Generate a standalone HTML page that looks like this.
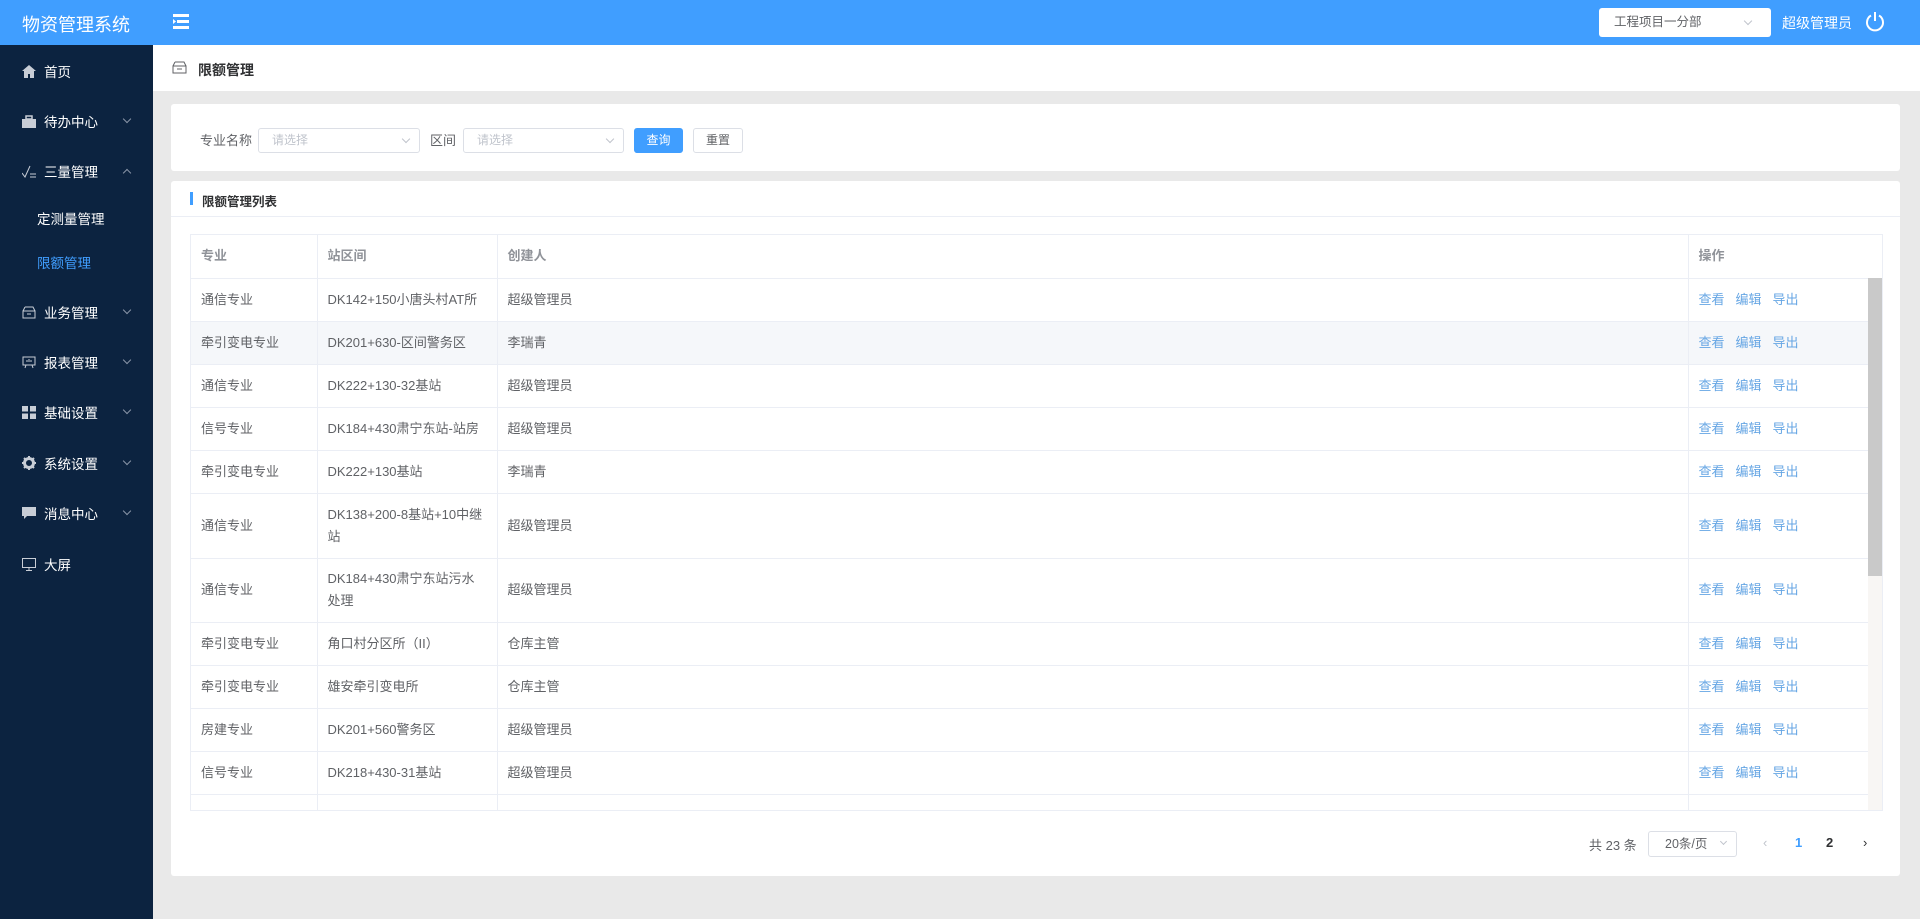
<!DOCTYPE html>
<html><head><meta charset="utf-8"><style>
*{box-sizing:border-box;margin:0;padding:0}
body{width:1920px;height:919px;overflow:hidden;background:#e9e9e9;font-family:"Liberation Sans","Noto Sans CJK SC",sans-serif;color:#606266;position:relative}
.abs{position:absolute}
#hdr{left:0;top:0;width:1920px;height:45px;background:#409eff}
#logo{left:22px;top:11px;font-size:18px;color:#fff}
#side{left:0;top:45px;width:153px;height:874px;background:#0c2340}
.mi{position:absolute;left:22px;font-size:13.5px;color:#fff;display:flex;align-items:center;height:20px}
.mi svg{margin-right:8px}
.arr{position:absolute;left:124px;width:6px;height:6px;border-right:1px solid #8b96a8;border-bottom:1px solid #8b96a8;transform:rotate(45deg)}
.sub{position:absolute;left:37px;font-size:13.5px;color:#fff}
#crumb{left:153px;top:45px;width:1767px;height:46px;background:#fff}
.card{background:#fff;border-radius:3px}
.sel{position:absolute;height:25px;border:1px solid #dcdfe6;border-radius:3px;background:#fff;font-size:12px;color:#c0c4cc;padding-left:13px;line-height:23px}
.sel i{position:absolute;right:10px;top:7px;width:6px;height:6px;border-right:1px solid #c0c4cc;border-bottom:1px solid #c0c4cc;transform:rotate(45deg)}
.btn{position:absolute;height:25px;border-radius:3px;font-size:12px;text-align:center;line-height:23px}
table{border-collapse:collapse;font-size:13px;color:#606266;table-layout:fixed}
td,th{padding:0 10px;text-align:left;font-weight:normal;border-bottom:1px solid #ebeef5;line-height:22px}
th{color:#909399;height:43px;font-weight:bold}
td.c0,th.c0{border-right:1px solid #ebeef5}
.op span{color:#66a6e4;margin-right:11px}
.c3{border-left:1px solid #ebeef5}
tr.s td{background:#f5f7fa}
</style></head><body>
<div id="hdr" class="abs">
 <div id="logo" class="abs">物资管理系统</div>
 <svg class="abs" style="left:173px;top:14px" width="16" height="15" viewBox="0 0 16 15"><rect x="0" y="0" width="16" height="3" fill="#fff"/><rect x="4" y="6" width="12" height="3" fill="#fff"/><rect x="0" y="12" width="16" height="3" fill="#fff"/><path d="M0 5 L3 7.5 L0 10Z" fill="#fff"/></svg>
 <div class="abs" style="left:1599px;top:8px;width:172px;height:29px;background:#fff;border-radius:3px;font-size:12.5px;color:#606266;padding-left:15px;line-height:29px">工程项目一分部<i style="position:absolute;right:20px;top:10px;width:6px;height:6px;border-right:1px solid #c0c4cc;border-bottom:1px solid #c0c4cc;transform:rotate(45deg)"></i></div>
 <div class="abs" style="left:1782px;top:13px;font-size:14px;color:#fff">超级管理员</div>
 <svg class="abs" style="left:1864px;top:11px" width="22" height="22" viewBox="0 0 22 22"><path d="M7 4.5 A8 8 0 1 0 15 4.5" fill="none" stroke="#fff" stroke-width="2"/><line x1="11" y1="1" x2="11" y2="10" stroke="#fff" stroke-width="2"/></svg>
</div>
<div id="side" class="abs">
 <div class="mi" style="top:16px"><svg width="14" height="13" viewBox="0 0 14 13"><path d="M7 0L0 6h2v7h4V9h2v4h4V6h2z" fill="#c8cdd6"/></svg>首页</div>
 <div class="mi" style="top:66px"><svg width="14" height="13" viewBox="0 0 14 13"><rect x="0" y="4" width="14" height="9" fill="#c8cdd6"/><rect x="4" y="1" width="6" height="3" fill="none" stroke="#c8cdd6" stroke-width="1.5"/></svg>待办中心</div><div class="arr" style="top:71px"></div>
 <div class="mi" style="top:116px"><svg width="14" height="13" viewBox="0 0 14 13"><path d="M0 8l3 4L8 1M8 9h6M8 12h6" fill="none" stroke="#c8cdd6"/></svg>三量管理</div><div class="arr" style="top:125px;transform:rotate(225deg)"></div>
 <div class="sub" style="top:163px">定测量管理</div>
 <div class="sub" style="top:207px;color:#409eff">限额管理</div>
 <div class="mi" style="top:257px"><svg width="14" height="13" viewBox="0 0 14 13"><path d="M1 5h12v7H1zM3 1h8l2 4M1 5l2-4M5 8h4" fill="none" stroke="#c8cdd6"/></svg>业务管理</div><div class="arr" style="top:262px"></div>
 <div class="mi" style="top:307px"><svg width="14" height="13" viewBox="0 0 14 13"><path d="M1 1h12v8H1zM4 9l-1 3M10 9l1 3M5 6v-2M7 6V3M9 6V4" fill="none" stroke="#c8cdd6"/></svg>报表管理</div><div class="arr" style="top:312px"></div>
 <div class="mi" style="top:357px"><svg width="14" height="13" viewBox="0 0 14 13"><rect x="0" y="0" width="6" height="5.5" fill="#c8cdd6"/><rect x="8" y="0" width="6" height="5.5" fill="#c8cdd6"/><rect x="0" y="7.5" width="6" height="5.5" fill="#c8cdd6"/><rect x="8" y="7.5" width="6" height="5.5" fill="#c8cdd6"/></svg>基础设置</div><div class="arr" style="top:362px"></div>
 <div class="mi" style="top:408px"><svg width="14" height="14" viewBox="0 0 14 14"><circle cx="7" cy="7" r="4.5" fill="none" stroke="#c8cdd6" stroke-width="3"/><path d="M7 0v3M7 11v3M0 7h3M11 7h3M2 2l2 2M10 10l2 2M2 12l2-2M10 4l2-2" stroke="#c8cdd6" stroke-width="2"/></svg>系统设置</div><div class="arr" style="top:413px"></div>
 <div class="mi" style="top:458px"><svg width="14" height="13" viewBox="0 0 14 13"><path d="M0 0h14v9H5l-3 3V9H0z" fill="#c8cdd6"/></svg>消息中心</div><div class="arr" style="top:463px"></div>
 <div class="mi" style="top:509px"><svg width="14" height="13" viewBox="0 0 14 13"><rect x="0.5" y="0.5" width="13" height="9" fill="none" stroke="#c8cdd6"/><path d="M4 12.5h6M7 10v2" stroke="#c8cdd6"/></svg>大屏</div>
</div>
<div id="crumb" class="abs">
 <svg class="abs" style="left:19px;top:16px" width="15" height="13" viewBox="0 0 15 13"><path d="M1 5h13v7H1zM3 1h9l2 4M1 5l2-4M5 8h5" fill="none" stroke="#606266"/></svg>
 <div class="abs" style="left:45px;top:15px;font-size:14px;color:#303133;font-weight:bold">限额管理</div>
</div>
<div class="abs card" style="left:171px;top:104px;width:1729px;height:67px">
 <div class="abs" style="left:29px;top:26px;font-size:13px">专业名称</div>
 <div class="sel" style="left:87px;top:24px;width:162px">请选择<i></i></div>
 <div class="abs" style="left:259px;top:26px;font-size:13px">区间</div>
 <div class="sel" style="left:292px;top:24px;width:161px">请选择<i></i></div>
 <div class="btn" style="left:463px;top:24px;width:49px;background:#409eff;color:#fff;border:1px solid #409eff">查询</div>
 <div class="btn" style="left:522px;top:24px;width:50px;background:#fff;color:#606266;border:1px solid #dcdfe6">重置</div>
</div>
<div class="abs card" style="left:171px;top:181px;width:1729px;height:695px">
 <div class="abs" style="left:19px;top:11px;width:3px;height:13px;background:#409eff"></div>
 <div class="abs" style="left:31px;top:10px;font-size:12.5px;color:#303133;font-weight:bold">限额管理列表</div>
 <div class="abs" style="left:0;top:35px;width:1729px;height:1px;background:#ebeef5"></div>
 <div class="abs" style="left:19px;top:53px;width:1693px;height:577px;border:1px solid #ebeef5;overflow:hidden">
  <table style="width:1677px">
   <colgroup><col style="width:126px"><col style="width:180px"><col style="width:1191px"><col style="width:180px"></colgroup>
   <tr><th class="c0">专业</th><th class="c0">站区间</th><th>创建人</th><th class="c3">操作</th></tr>
   <tr style="height:43px"><td class="c0">通信专业</td><td class="c0">DK142+150小唐头村AT所</td><td>超级管理员</td><td class="c3 op"><span>查看</span><span>编辑</span><span>导出</span></td></tr>
   <tr class="s" style="height:43px"><td class="c0">牵引变电专业</td><td class="c0">DK201+630-区间警务区</td><td>李瑞青</td><td class="c3 op"><span>查看</span><span>编辑</span><span>导出</span></td></tr>
   <tr style="height:43px"><td class="c0">通信专业</td><td class="c0">DK222+130-32基站</td><td>超级管理员</td><td class="c3 op"><span>查看</span><span>编辑</span><span>导出</span></td></tr>
   <tr style="height:43px"><td class="c0">信号专业</td><td class="c0">DK184+430肃宁东站-站房</td><td>超级管理员</td><td class="c3 op"><span>查看</span><span>编辑</span><span>导出</span></td></tr>
   <tr style="height:43px"><td class="c0">牵引变电专业</td><td class="c0">DK222+130基站</td><td>李瑞青</td><td class="c3 op"><span>查看</span><span>编辑</span><span>导出</span></td></tr>
   <tr style="height:65px"><td class="c0">通信专业</td><td class="c0">DK138+200-8基站+10中继站</td><td>超级管理员</td><td class="c3 op"><span>查看</span><span>编辑</span><span>导出</span></td></tr>
   <tr style="height:64px"><td class="c0">通信专业</td><td class="c0" style="padding-right:9px">DK184+430肃宁东站污水处理</td><td>超级管理员</td><td class="c3 op"><span>查看</span><span>编辑</span><span>导出</span></td></tr>
   <tr style="height:43px"><td class="c0">牵引变电专业</td><td class="c0">角口村分区所（II）</td><td>仓库主管</td><td class="c3 op"><span>查看</span><span>编辑</span><span>导出</span></td></tr>
   <tr style="height:43px"><td class="c0">牵引变电专业</td><td class="c0">雄安牵引变电所</td><td>仓库主管</td><td class="c3 op"><span>查看</span><span>编辑</span><span>导出</span></td></tr>
   <tr style="height:43px"><td class="c0">房建专业</td><td class="c0">DK201+560警务区</td><td>超级管理员</td><td class="c3 op"><span>查看</span><span>编辑</span><span>导出</span></td></tr>
   <tr style="height:43px"><td class="c0">信号专业</td><td class="c0">DK218+430-31基站</td><td>超级管理员</td><td class="c3 op"><span>查看</span><span>编辑</span><span>导出</span></td></tr>
   <tr style="height:43px"><td class="c0"></td><td class="c0"></td><td></td><td class="c3"></td></tr>
  </table>
  <div class="abs" style="left:1677px;top:43px;width:14px;height:534px;background:#f8f6f4"></div>
  <div class="abs" style="left:1677px;top:43px;width:14px;height:298px;background:#c9c9c9"></div>
 </div>
 <div class="abs" style="left:1418px;top:654px;font-size:13px">共 23 条</div>
 <div class="abs" style="left:1477px;top:650px;width:89px;height:26px;border:1px solid #dcdfe6;border-radius:3px;font-size:12.5px;line-height:24px;padding-left:16px">20条/页<i style="position:absolute;right:10px;top:7px;width:5px;height:5px;border-right:1px solid #c0c4cc;border-bottom:1px solid #c0c4cc;transform:rotate(45deg)"></i></div>
 <div class="abs" style="left:1592px;top:654px;font-size:13px;color:#c0c4cc">‹</div>
 <div class="abs" style="left:1624px;top:654px;font-size:13px;color:#409eff;font-weight:bold">1</div>
 <div class="abs" style="left:1655px;top:654px;font-size:13px;color:#303133;font-weight:bold">2</div>
 <div class="abs" style="left:1692px;top:654px;font-size:13px;color:#303133">›</div>
</div>
</body></html>
